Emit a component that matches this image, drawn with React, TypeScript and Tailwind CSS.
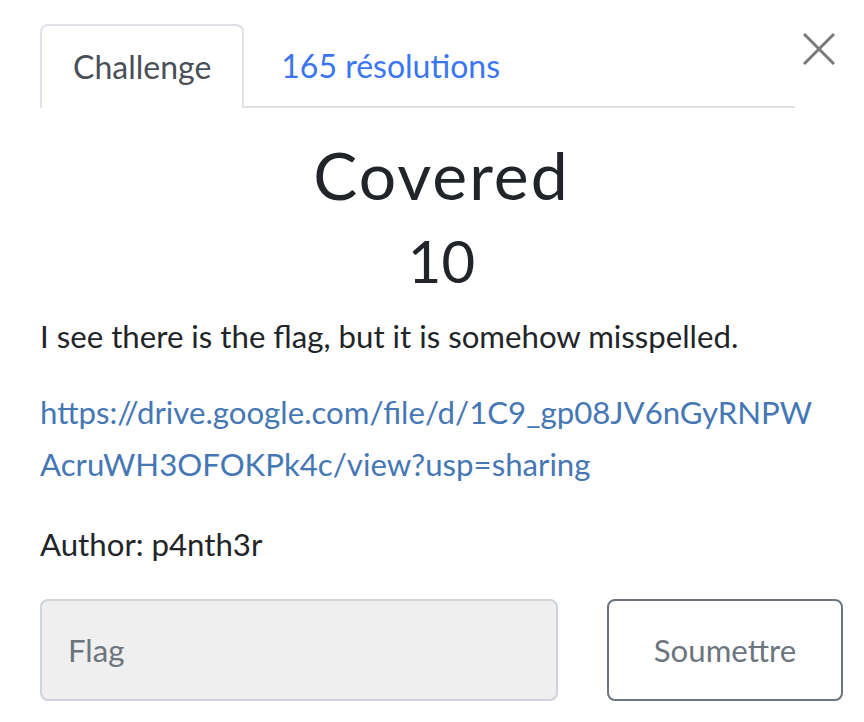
import React from "react";

export default function App() {
  return (
    <div
      className="w-[864px] h-[722px] bg-white overflow-hidden text-[#212529]"
      style={{ fontFamily: "Lato, 'Noto Sans', sans-serif" }}
    >
      <div className="relative ml-[40px] pt-[24px] w-[803px]">
        {/* Close */}
        <button className="absolute right-[8px] top-[33px] w-[32px] h-[32px]">
          <svg viewBox="0 0 32 32" className="w-[32px] h-[32px]">
            <path d="M1 1 L31 31 M31 1 L1 31" stroke="#7a7a7a" strokeWidth="3" />
          </svg>
        </button>

        {/* Tabs */}
        <ul className="flex w-[755px] border-b-2 border-[#dee2e6] text-[32px]">
          <li className="-mb-[2px] h-[84px] px-[31px] flex items-center border-2 border-b-0 border-[#dee2e6] rounded-t-[8px] bg-white text-[#495057]">
            Challenge
          </li>
          <li className="-mb-[2px] h-[84px] px-[37px] flex items-center text-[#3a76f0]">
            165 résolutions
          </li>
        </ul>

        {/* Title */}
        <h2 className="mt-[27px] text-center text-[66px] leading-[80px] tracking-[2px]">
          Covered
        </h2>
        <h3 className="mt-[6px] text-center text-[58px] leading-[80px]">10</h3>

        {/* Description */}
        <div className="mt-[9px] text-[31.2px] leading-[52px]">
          <p>I see there is the flag, but it is somehow misspelled.</p>
          <p className="mt-[24px] w-[785px]">
            <a className="text-[#4677b5] break-all">
              https://drive.google.com/file/d/1C9_gp08JV6nGyRNPWAcruWH3OFOKPk4c/view?usp=sharing
            </a>
          </p>
          <p className="mt-[28px]">Author: p4nth3r</p>
        </div>

        {/* Submit row */}
        <div className="mt-[29px] flex justify-between">
          <div className="w-[518px] h-[102px] rounded-[8px] border-2 border-[#ced4da] bg-[#efefef] flex items-center px-[26px] text-[31.2px] text-[#6c757d]">
            Flag
          </div>
          <button className="w-[236px] h-[102px] rounded-[8px] border-2 border-[#6c757d] bg-white text-[31.2px] text-[#6c757d]">
            Soumettre
          </button>
        </div>
      </div>
    </div>
  );
}
